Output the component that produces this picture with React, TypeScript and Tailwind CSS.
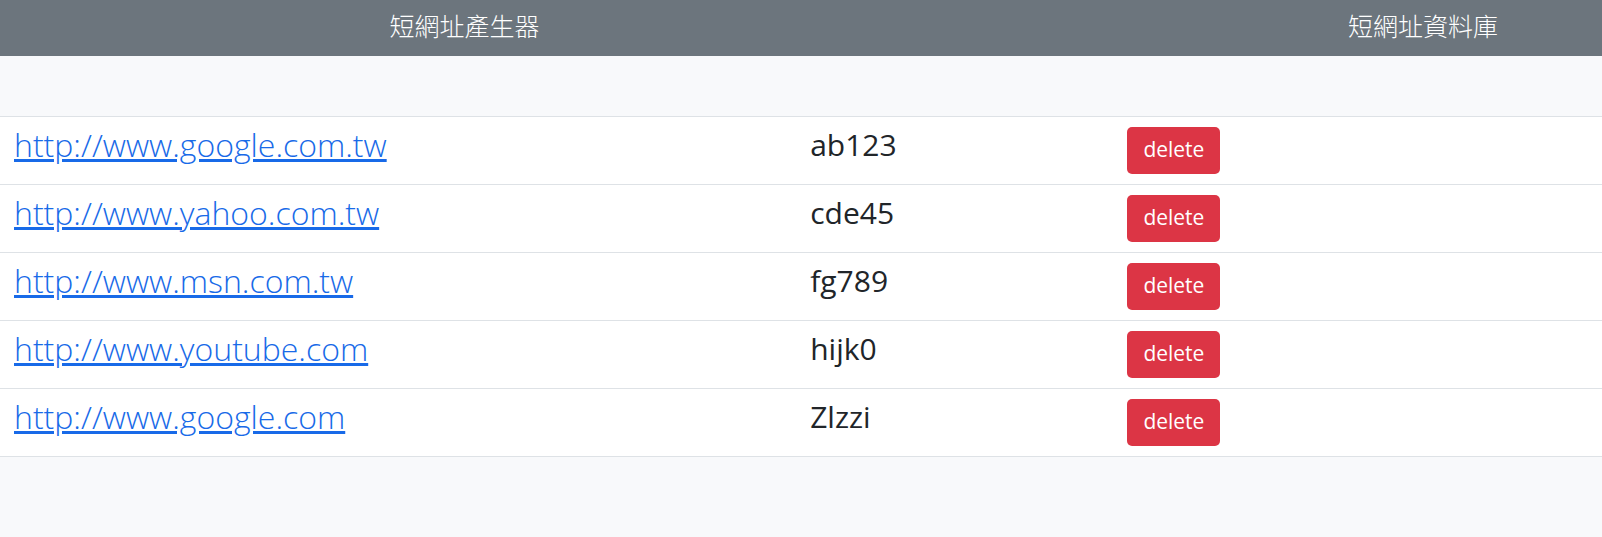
const rows = [
  { url: "http://www.google.com.tw", code: "ab123" },
  { url: "http://www.yahoo.com.tw", code: "cde45" },
  { url: "http://www.msn.com.tw", code: "fg789" },
  { url: "http://www.youtube.com", code: "hijk0" },
  { url: "http://www.google.com", code: "Zlzzi" },
];

export default function App() {
  return (
    <div className="min-h-screen bg-[#f8f9fb] pb-20 font-['Open_Sans','Noto_Sans_CJK_TC',sans-serif] text-[#212529]">
      <nav className="flex h-14 items-center bg-[#6c757d] pb-1 text-[25px] leading-8 font-light text-white">
        <a href="#generator" className="w-[58%] text-center">短網址產生器</a>
        <a href="#database" className="ml-auto pr-26 text-center">短網址資料庫</a>
      </nav>
      <table className="mt-15 w-full table-fixed border-collapse bg-white text-left">
        <colgroup>
          <col className="w-[49.7%]" />
          <col className="w-[19.8%]" />
          <col />
        </colgroup>
        <tbody>
          {rows.map((row) => (
            <tr key={row.url} className="h-17 border-y border-[#dee2e6] align-top">
              <td className="px-3.5 pt-1 text-[32px] leading-12 font-light">
                <a href={row.url} className="text-[#186ae8] underline decoration-3">{row.url}</a>
              </td>
              <td className="px-3.5 pt-1 text-[30px] leading-12">{row.code}</td>
              <td className="px-3.5 pt-2.5">
                <button type="button" className="block h-[47px] rounded-[5px] bg-[#dc3545] px-4 pb-1 text-[21px] leading-8 text-white">
                  delete
                </button>
              </td>
            </tr>
          ))}
        </tbody>
      </table>
    </div>
  );
}
